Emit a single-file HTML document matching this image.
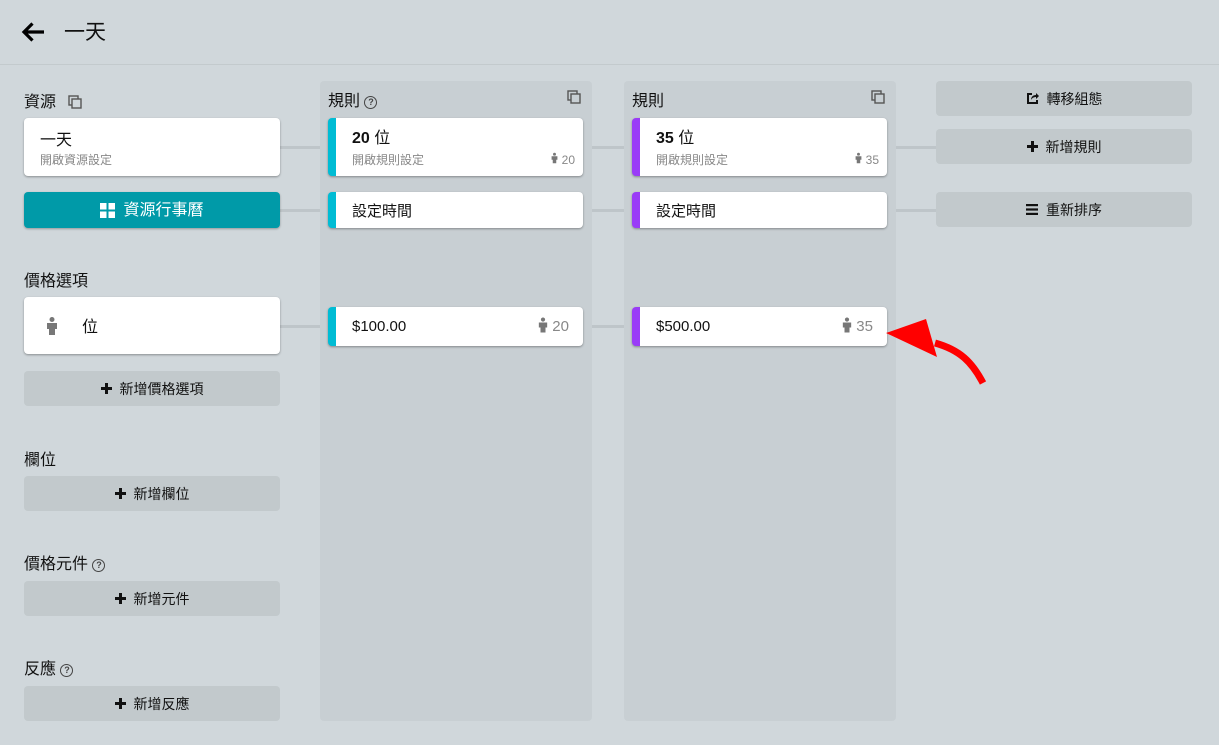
<!DOCTYPE html>
<html><head><meta charset="utf-8"><style>
*{box-sizing:border-box;margin:0;padding:0}
body{width:1219px;height:745px;background:#d0d7db;font-family:"Liberation Sans","Noto Sans CJK TC",sans-serif;color:#111;position:relative;overflow:hidden}
.a{position:absolute}
.hdr{left:0;top:64px;width:1219px;height:1px;background:#c3cacd}
.lbl{font-size:16px;color:#111;line-height:20px}
.card{background:#fff;border-radius:4px;box-shadow:0 1px 2px rgba(0,0,0,.35)}
.btn{background:#c2c9cc;border-radius:4px;font-size:14px;display:flex;align-items:center;justify-content:center;gap:8px;color:#111;line-height:16px}
.panel{background:#c8cfd3;border-radius:4px}
.line{height:3px;background:#bec5c9}
.cyan{border-left:8px solid #00bcd4}
.purp{border-left:8px solid #9a3cf7}
.t{font-size:15px;line-height:18px}
.sub{font-size:12px;color:#888;line-height:14px}
.num{font-size:12px;color:#888;line-height:14px}
.q{display:inline-block;width:13px;height:13px;border:1.5px solid #444;border-radius:50%;font-size:9px;line-height:10px;text-align:center;font-weight:bold;color:#444;vertical-align:1px}
.plus{width:11px;height:11px;position:relative}
.plus:before{content:"";position:absolute;left:4px;top:0;width:3px;height:11px;background:#111}
.plus:after{content:"";position:absolute;left:0;top:4px;width:11px;height:3px;background:#111}
</style></head><body>
<svg class="a" style="left:20px;top:21px" width="25" height="22" viewBox="0 0 25 22"><path d="M24 11H5M12.5 2.5L4 11l8.5 8.5" stroke="#000" stroke-width="3.2" fill="none"/></svg>
<div class="a" style="left:64px;top:21px;font-size:21px;line-height:24px">一天</div>
<div class="a hdr"></div>

<div class="a line" style="left:280px;top:146px;width:660px"></div>
<div class="a line" style="left:280px;top:209px;width:660px"></div>
<div class="a line" style="left:280px;top:325px;width:360px"></div>

<div class="a panel" style="left:320px;top:81px;width:272px;height:640px"></div>
<div class="a panel" style="left:624px;top:81px;width:272px;height:640px"></div>

<div class="a lbl" style="left:24px;top:93px">資源 <svg style="margin-left:8px;vertical-align:-2px" width="14" height="14" viewBox="0 0 14 14"><rect x="1" y="1" width="9" height="9" fill="none" stroke="#555" stroke-width="1.4"/><rect x="4" y="4" width="9" height="9" fill="#d0d7db" stroke="#555" stroke-width="1.4"/></svg></div>
<div class="a card" style="left:24px;top:118px;width:256px;height:58px"><div class="a" style="left:16px;top:13px;font-size:16px;line-height:20px">一天</div><div class="a sub" style="left:16px;top:35px">開啟資源設定</div></div>
<div class="a btn" style="left:24px;top:192px;width:256px;height:36px;background:#009aa8;color:#fff;font-size:16px;box-shadow:0 1px 2px rgba(0,0,0,.3)"><svg width="15" height="15" viewBox="0 0 15 15" fill="#fff"><rect x="0" y="0" width="6.5" height="6.5"/><rect x="8.5" y="0" width="6.5" height="6.5"/><rect x="0" y="8.5" width="6.5" height="6.5"/><rect x="8.5" y="8.5" width="6.5" height="6.5"/></svg><span style="position:relative;top:1px">資源行事曆</span></div>

<div class="a lbl" style="left:24px;top:272px">價格選項</div>
<div class="a card" style="left:24px;top:297px;width:256px;height:57px"><svg class="a" style="left:22px;top:20px" width="12" height="18" viewBox="0 0 12 18" fill="#777"><circle cx="6" cy="2.5" r="2.5"/><path d="M1 6h10v6H9v6H3v-6H1z"/></svg><div class="a" style="left:58px;top:21px;font-size:16px;line-height:20px">位</div></div>
<div class="a btn" style="left:24px;top:371px;width:256px;height:35px"><span class="plus"></span>新增價格選項</div>

<div class="a lbl" style="left:24px;top:451px">欄位</div>
<div class="a btn" style="left:24px;top:476px;width:256px;height:35px"><span class="plus"></span>新增欄位</div>
<div class="a lbl" style="left:24px;top:555px">價格元件 <span class="q">?</span></div>
<div class="a btn" style="left:24px;top:581px;width:256px;height:35px"><span class="plus"></span>新增元件</div>
<div class="a lbl" style="left:24px;top:660px">反應 <span class="q">?</span></div>
<div class="a btn" style="left:24px;top:686px;width:256px;height:35px"><span class="plus"></span>新增反應</div>

<div class="a lbl" style="left:328px;top:92px">規則 <span class="q">?</span></div>
<svg class="a" style="left:567px;top:90px" width="14" height="14" viewBox="0 0 14 14"><rect x="1" y="1" width="9" height="9" fill="none" stroke="#555" stroke-width="1.4"/><rect x="4" y="4" width="9" height="9" fill="#c8cfd3" stroke="#555" stroke-width="1.4"/></svg>
<div class="a card cyan" style="left:328px;top:118px;width:255px;height:58px"><div class="a" style="left:16px;top:11px;font-size:16px;font-weight:bold;line-height:20px">20 <span style="font-weight:normal">位</span></div><div class="a sub" style="left:16px;top:35px">開啟規則設定</div><div class="a num" style="right:8px;top:34px"><svg width="7" height="12" viewBox="0 0 12 18" fill="#777"><circle cx="6" cy="2.5" r="2.5"/><path d="M1 6h10v6H9v6H3v-6H1z"/></svg> 20</div></div>
<div class="a card cyan" style="left:328px;top:192px;width:255px;height:36px"><div class="a t" style="left:16px;top:11px">設定時間</div></div>
<div class="a card cyan" style="left:328px;top:307px;width:255px;height:39px"><div class="a t" style="left:16px;top:11px">$100.00</div><div class="a" style="right:14px;top:10px;font-size:15px;color:#888;line-height:18px"><svg width="10" height="16" viewBox="0 0 12 18" fill="#777" style="vertical-align:-2px"><circle cx="6" cy="2.5" r="2.5"/><path d="M1 6h10v6H9v6H3v-6H1z"/></svg> 20</div></div>

<div class="a lbl" style="left:632px;top:92px">規則</div>
<svg class="a" style="left:871px;top:90px" width="14" height="14" viewBox="0 0 14 14"><rect x="1" y="1" width="9" height="9" fill="none" stroke="#555" stroke-width="1.4"/><rect x="4" y="4" width="9" height="9" fill="#c8cfd3" stroke="#555" stroke-width="1.4"/></svg>
<div class="a card purp" style="left:632px;top:118px;width:255px;height:58px"><div class="a" style="left:16px;top:11px;font-size:16px;font-weight:bold;line-height:20px">35 <span style="font-weight:normal">位</span></div><div class="a sub" style="left:16px;top:35px">開啟規則設定</div><div class="a num" style="right:8px;top:34px"><svg width="7" height="12" viewBox="0 0 12 18" fill="#777"><circle cx="6" cy="2.5" r="2.5"/><path d="M1 6h10v6H9v6H3v-6H1z"/></svg> 35</div></div>
<div class="a card purp" style="left:632px;top:192px;width:255px;height:36px"><div class="a t" style="left:16px;top:11px">設定時間</div></div>
<div class="a card purp" style="left:632px;top:307px;width:255px;height:39px"><div class="a t" style="left:16px;top:11px">$500.00</div><div class="a" style="right:14px;top:10px;font-size:15px;color:#888;line-height:18px"><svg width="10" height="16" viewBox="0 0 12 18" fill="#777" style="vertical-align:-2px"><circle cx="6" cy="2.5" r="2.5"/><path d="M1 6h10v6H9v6H3v-6H1z"/></svg> 35</div></div>

<div class="a btn" style="left:936px;top:81px;width:256px;height:35px"><svg width="13" height="13" viewBox="0 0 13 13"><path d="M6 2H2v9h9V8" stroke="#111" stroke-width="2" fill="none"/><path d="M5 8c0-3 2-5 5-5V1l3 3-3 3V5c-2 0-4 1-5 3z" fill="#111"/></svg>轉移組態</div>
<div class="a btn" style="left:936px;top:129px;width:256px;height:35px"><span class="plus"></span>新增規則</div>
<div class="a btn" style="left:936px;top:192px;width:256px;height:35px"><svg width="12" height="11" viewBox="0 0 12 11" fill="#111"><rect y="0" width="12" height="2.2"/><rect y="4.4" width="12" height="2.2"/><rect y="8.8" width="12" height="2.2"/></svg>重新排序</div>

<svg class="a" style="left:880px;top:315px" width="115" height="75" viewBox="0 0 115 75"><path d="M103 68C92 47 80 35 55 28" stroke="#f00" stroke-width="7" fill="none"/><path d="M6 18L46 4 57 42z" fill="#f00"/></svg>
</body></html>
